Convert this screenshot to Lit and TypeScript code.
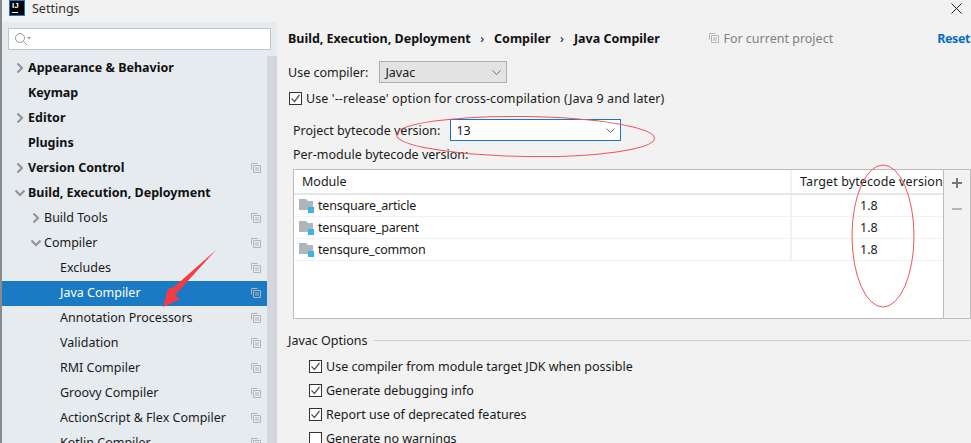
import { LitElement, html, css, svg } from "lit";
import { customElement } from "lit/decorators.js";

const copy = svg`<svg class="copy" width="10" height="10" viewBox="0 0 10 10" fill="none" stroke="#aeb4ba"><path d="M6.5.5h-6v6"/><path d="M2.5 2.5h7v7h-7z"/><path d="M4 5h4M4 7h4"/></svg>`;
const right = svg`<svg class="arrow" width="10" height="10" viewBox="0 0 10 10" fill="none" stroke="#8f9398" stroke-width="2"><path d="M2.5.5l4.5 4.5-4.5 4.5"/></svg>`;
const down = svg`<svg class="arrow" width="10" height="10" viewBox="0 0 10 10" fill="none" stroke="#8f9398" stroke-width="2"><path d="M.5 2.5l4.5 4.5 4.5-4.5"/></svg>`;
const chev = svg`<svg width="9" height="5" viewBox="0 0 9 5" fill="none" stroke="#6e6e6e"><path d="M.5.5l4 4 4-4"/></svg>`;
const tick = svg`<svg width="11" height="11" viewBox="0 0 11 11" fill="none" stroke="#555" stroke-width="1.3"><path d="M1.5 5.5l3 3 5-6.5"/></svg>`;
const folder = svg`<svg width="16" height="14" viewBox="0 0 16 14"><path fill="#aeb6bd" d="M0 0h7l2 2h5v9H0z"/><rect x="9" y="8" width="6" height="6" fill="#3db3e8"/></svg>`;

type Row = { t: string; lvl: number; bold?: boolean; arr?: "r" | "d"; copy?: boolean; sel?: boolean };
const rows: Row[] = [
  { t: "Appearance & Behavior", lvl: 0, bold: true, arr: "r" },
  { t: "Keymap", lvl: 0, bold: true },
  { t: "Editor", lvl: 0, bold: true, arr: "r" },
  { t: "Plugins", lvl: 0, bold: true },
  { t: "Version Control", lvl: 0, bold: true, arr: "r", copy: true },
  { t: "Build, Execution, Deployment", lvl: 0, bold: true, arr: "d" },
  { t: "Build Tools", lvl: 1, arr: "r", copy: true },
  { t: "Compiler", lvl: 1, arr: "d", copy: true },
  { t: "Excludes", lvl: 2, copy: true },
  { t: "Java Compiler", lvl: 2, copy: true, sel: true },
  { t: "Annotation Processors", lvl: 2, copy: true },
  { t: "Validation", lvl: 2, copy: true },
  { t: "RMI Compiler", lvl: 2, copy: true },
  { t: "Groovy Compiler", lvl: 2, copy: true },
  { t: "ActionScript & Flex Compiler", lvl: 2, copy: true },
  { t: "Kotlin Compiler", lvl: 2, copy: true },
];
const modules = ["tensquare_article", "tensquare_parent", "tensqure_common"];
const options: [string, boolean][] = [
  ["Use compiler from module target JDK when possible", true],
  ["Generate debugging info", true],
  ["Report use of deprecated features", true],
  ["Generate no warnings", false],
];

@customElement("app-root")
export class AppRoot extends LitElement {
  static styles = css`
    :host { display: block; width: 971px; height: 443px; overflow: hidden; position: relative; background: #f2f2f2;
      font-family: "Noto Sans", "Open Sans", sans-serif; font-size: 12.5px; color: #1a1a1a; }
    .window { height: 443px; display: flex; flex-direction: column; border-left: 2px solid #8a8a8a; box-sizing: border-box; }
    .title { height: 22px; flex: none; display: flex; align-items: flex-start; gap: 7px; padding: 0 0 0 7px; box-sizing: border-box; }
    .logo { width: 16px; height: 16px; background: #000; border: 1px solid #1478c8; box-sizing: border-box; color: #fff; font: bold 8px/10px "Liberation Sans", sans-serif; padding-left: 2px; position: relative; flex: none; }
    .logo::after { content: ""; position: absolute; left: 2px; bottom: 2px; width: 6px; height: 1px; background: #fff; }
    .title-text { flex: 1; color: #333; line-height: 18px; }
    .close { margin-top: 3px; margin-right: 9px; display: flex; }
    .body { flex: 1; display: flex; min-height: 0; }
    .side { width: 275px; flex: none; background: #e6ebf0; display: flex; flex-direction: column; overflow: hidden; }
    .search-wrap { padding: 6px 6px 6px 6px; flex: none; }
    .search { height: 22px; width: 263px; box-sizing: border-box; background: #fff; border: 1px solid #c4c4c4; display: flex; align-items: center; padding-left: 5px; }
    .tree-wrap { flex: 1; display: flex; min-height: 0; }
    .tree { width: 265px; flex: none; }
    .scroll { width: 10px; background: #d3d6da; }
    .row { height: 25px; display: flex; align-items: center; position: relative; white-space: nowrap; padding-right: 6px; padding-bottom: 2px; box-sizing: border-box; }
    .row.sel { background: #1a7ac4; color: #fff; }
    .row.bold { font-weight: 700; color: #111; }
    .arr { position: absolute; top: 7px; display: flex; }
    .row .name { flex: 1; }
    .l0 { padding-left: 26px; } .l1 { padding-left: 42px; } .l2 { padding-left: 58px; }
    .l0 .arr { left: 13px; } .l1 .arr { left: 29px; }
    .copy { display: block; }
    .main { flex: 1; min-width: 0; display: flex; flex-direction: column; padding: 8px 1px 0 11px; margin-top: -1px; overflow: hidden; }
    .main > * { flex: none; }
    .crumbs { height: 18px; display: flex; align-items: center; font-weight: 700; color: #111; white-space: nowrap; }
    .sep { margin: 0 10px 0 9.5px; font-weight: 400; }
    .scope { margin-left: auto; display: flex; align-items: center; gap: 4px; color: #808080; font-weight: 400; margin-right: 104px; }
    .reset { color: #0b6cc4; letter-spacing: -0.4px; }
    .comp { display: flex; align-items: center; margin-top: 14px; height: 22px; }
    .select { box-sizing: border-box; width: 128px; height: 22px; margin-left: 11px; background: #e3e3e3; border: 1px solid #adadad; display: flex; align-items: center; justify-content: space-between; padding: 0 5px 0 5px; }
    .check { display: flex; align-items: center; gap: 4px; height: 24px; white-space: nowrap; }
    .box { width: 11px; height: 11px; border: 1px solid #333; background: #fff; flex: none; display: flex; }
    .rel { margin-top: 3px; margin-left: 1px; letter-spacing: 0.1px; }
    .proj { display: flex; align-items: center; margin-left: 5px; margin-top: 9px; height: 22px; }
    .combo { box-sizing: border-box; width: 171px; height: 22px; margin-left: 10px; background: #fff; border: 1px solid #0f78d0; display: flex; align-items: center; justify-content: space-between; padding: 0 5px; }
    .per { margin-left: 5px; margin-top: 4px; height: 20px; line-height: 20px; }
    .table { margin-left: 5px; margin-top: 4px; margin-right: -1px; height: 150px; box-sizing: border-box; border: 1px solid #bdbdbd; display: flex; }
    .grid { flex: 1; background: #fff; border-right: 1px solid #bdbdbd; }
    .tools { width: 26px; display: flex; flex-direction: column; align-items: center; padding-top: 7px; gap: 14px; }
    .tr { display: flex; height: 22px; border-bottom: 1px solid #f2f2f2; box-sizing: border-box; }
    .tr.head { height: 25px; border-bottom: 2px solid #e6e6e6; }
    .c1 { width: 498px; box-sizing: border-box; border-right: 2px solid #f2f2f2; display: flex; align-items: center; padding-left: 5px; gap: 3px; }
    .c1 span { letter-spacing: -0.2px; }
    .head .c1 { padding-left: 8px; }
    .c2 { flex: 1; display: flex; align-items: center; padding-left: 68px; }
    .head .c2 { padding-left: 8px; white-space: nowrap; letter-spacing: 0.1px; }
    .group { display: flex; align-items: center; gap: 6px; margin-top: 12px; height: 18px; }
    .line { flex: 1; height: 1px; background: #cfcfcf; }
    .opts { padding-left: 21px; margin-top: 5px; }
    .ov { position: absolute; left: 0; top: 0; pointer-events: none; }
  `;

  render() {
    return html`
      <div class="window">
        <div class="title">
          <div class="logo">IJ</div>
          <div class="title-text">Settings</div>
          <div class="close"><svg width="11" height="11" viewBox="0 0 11 11" stroke="#222" fill="none"><path d="M.5.5l10 10M10.5.5l-10 10"/></svg></div>
        </div>
        <div class="body">
          <div class="side">
            <div class="search-wrap">
              <div class="search">
                <svg width="18" height="14" viewBox="0 0 18 14" fill="none" stroke="#9a9a9a"><circle cx="6" cy="6" r="4.5"/><path d="M9.5 9.5l3.5 3.5"/><path d="M13 5h4l-2 2.5z" fill="#9a9a9a" stroke="none"/></svg>
              </div>
            </div>
            <div class="tree-wrap">
              <div class="tree">
                ${rows.map(r => html`
                  <div class="row l${r.lvl} ${r.bold ? "bold" : ""} ${r.sel ? "sel" : ""}">
                    ${r.arr ? html`<span class="arr">${r.arr === "r" ? right : down}</span>` : ""}
                    <span class="name">${r.t}</span>
                    ${r.copy ? copy : ""}
                  </div>`)}
              </div>
              <div class="scroll"></div>
            </div>
          </div>
          <div class="main">
            <div class="crumbs">
              <span>Build, Execution, Deployment</span><span class="sep">›</span>
              <span>Compiler</span><span class="sep">›</span>
              <span>Java Compiler</span>
              <span class="scope">${copy}For current project</span>
              <span class="reset">Reset</span>
            </div>
            <div class="comp">Use compiler:
              <div class="select"><span>Javac</span>${chev}</div>
            </div>
            <div class="check rel"><span class="box">${tick}</span>Use '--release' option for cross-compilation (Java 9 and later)</div>
            <div class="proj">Project bytecode version:
              <div class="combo"><span>13</span>${chev}</div>
            </div>
            <div class="per">Per-module bytecode version:</div>
            <div class="table">
              <div class="grid">
                <div class="tr head"><div class="c1">Module</div><div class="c2">Target bytecode version</div></div>
                ${modules.map(m => html`<div class="tr"><div class="c1">${folder}<span>${m}</span></div><div class="c2">1.8</div></div>`)}
              </div>
              <div class="tools">
                <svg width="12" height="12" viewBox="0 0 12 12" fill="#777"><path d="M5 1h2v4h4v2H7v4H5V7H1V5h4z"/></svg>
                <svg width="12" height="12" viewBox="0 0 12 12" fill="#b5b5b5"><path d="M1 5h10v2H1z"/></svg>
              </div>
            </div>
            <div class="group"><span>Javac Options</span><span class="line"></span></div>
            <div class="opts">
              ${options.map(([t, on]) => html`<div class="check"><span class="box">${on ? tick : ""}</span>${t}</div>`)}
            </div>
          </div>
        </div>
      </div>
      <svg class="ov" width="971" height="443" viewBox="0 0 971 443" fill="none">
        <ellipse cx="525.5" cy="136.5" rx="129" ry="20" stroke="#f0555c" transform="rotate(0.8 525.5 136.5)"/>
        <ellipse cx="883" cy="236" rx="31" ry="71" stroke="#f0555c"/>
        <path fill="#f63c41" d="M216 250L174 287 168 289 163 307 180 299 175 295z"/>
      </svg>
    `;
  }
}
